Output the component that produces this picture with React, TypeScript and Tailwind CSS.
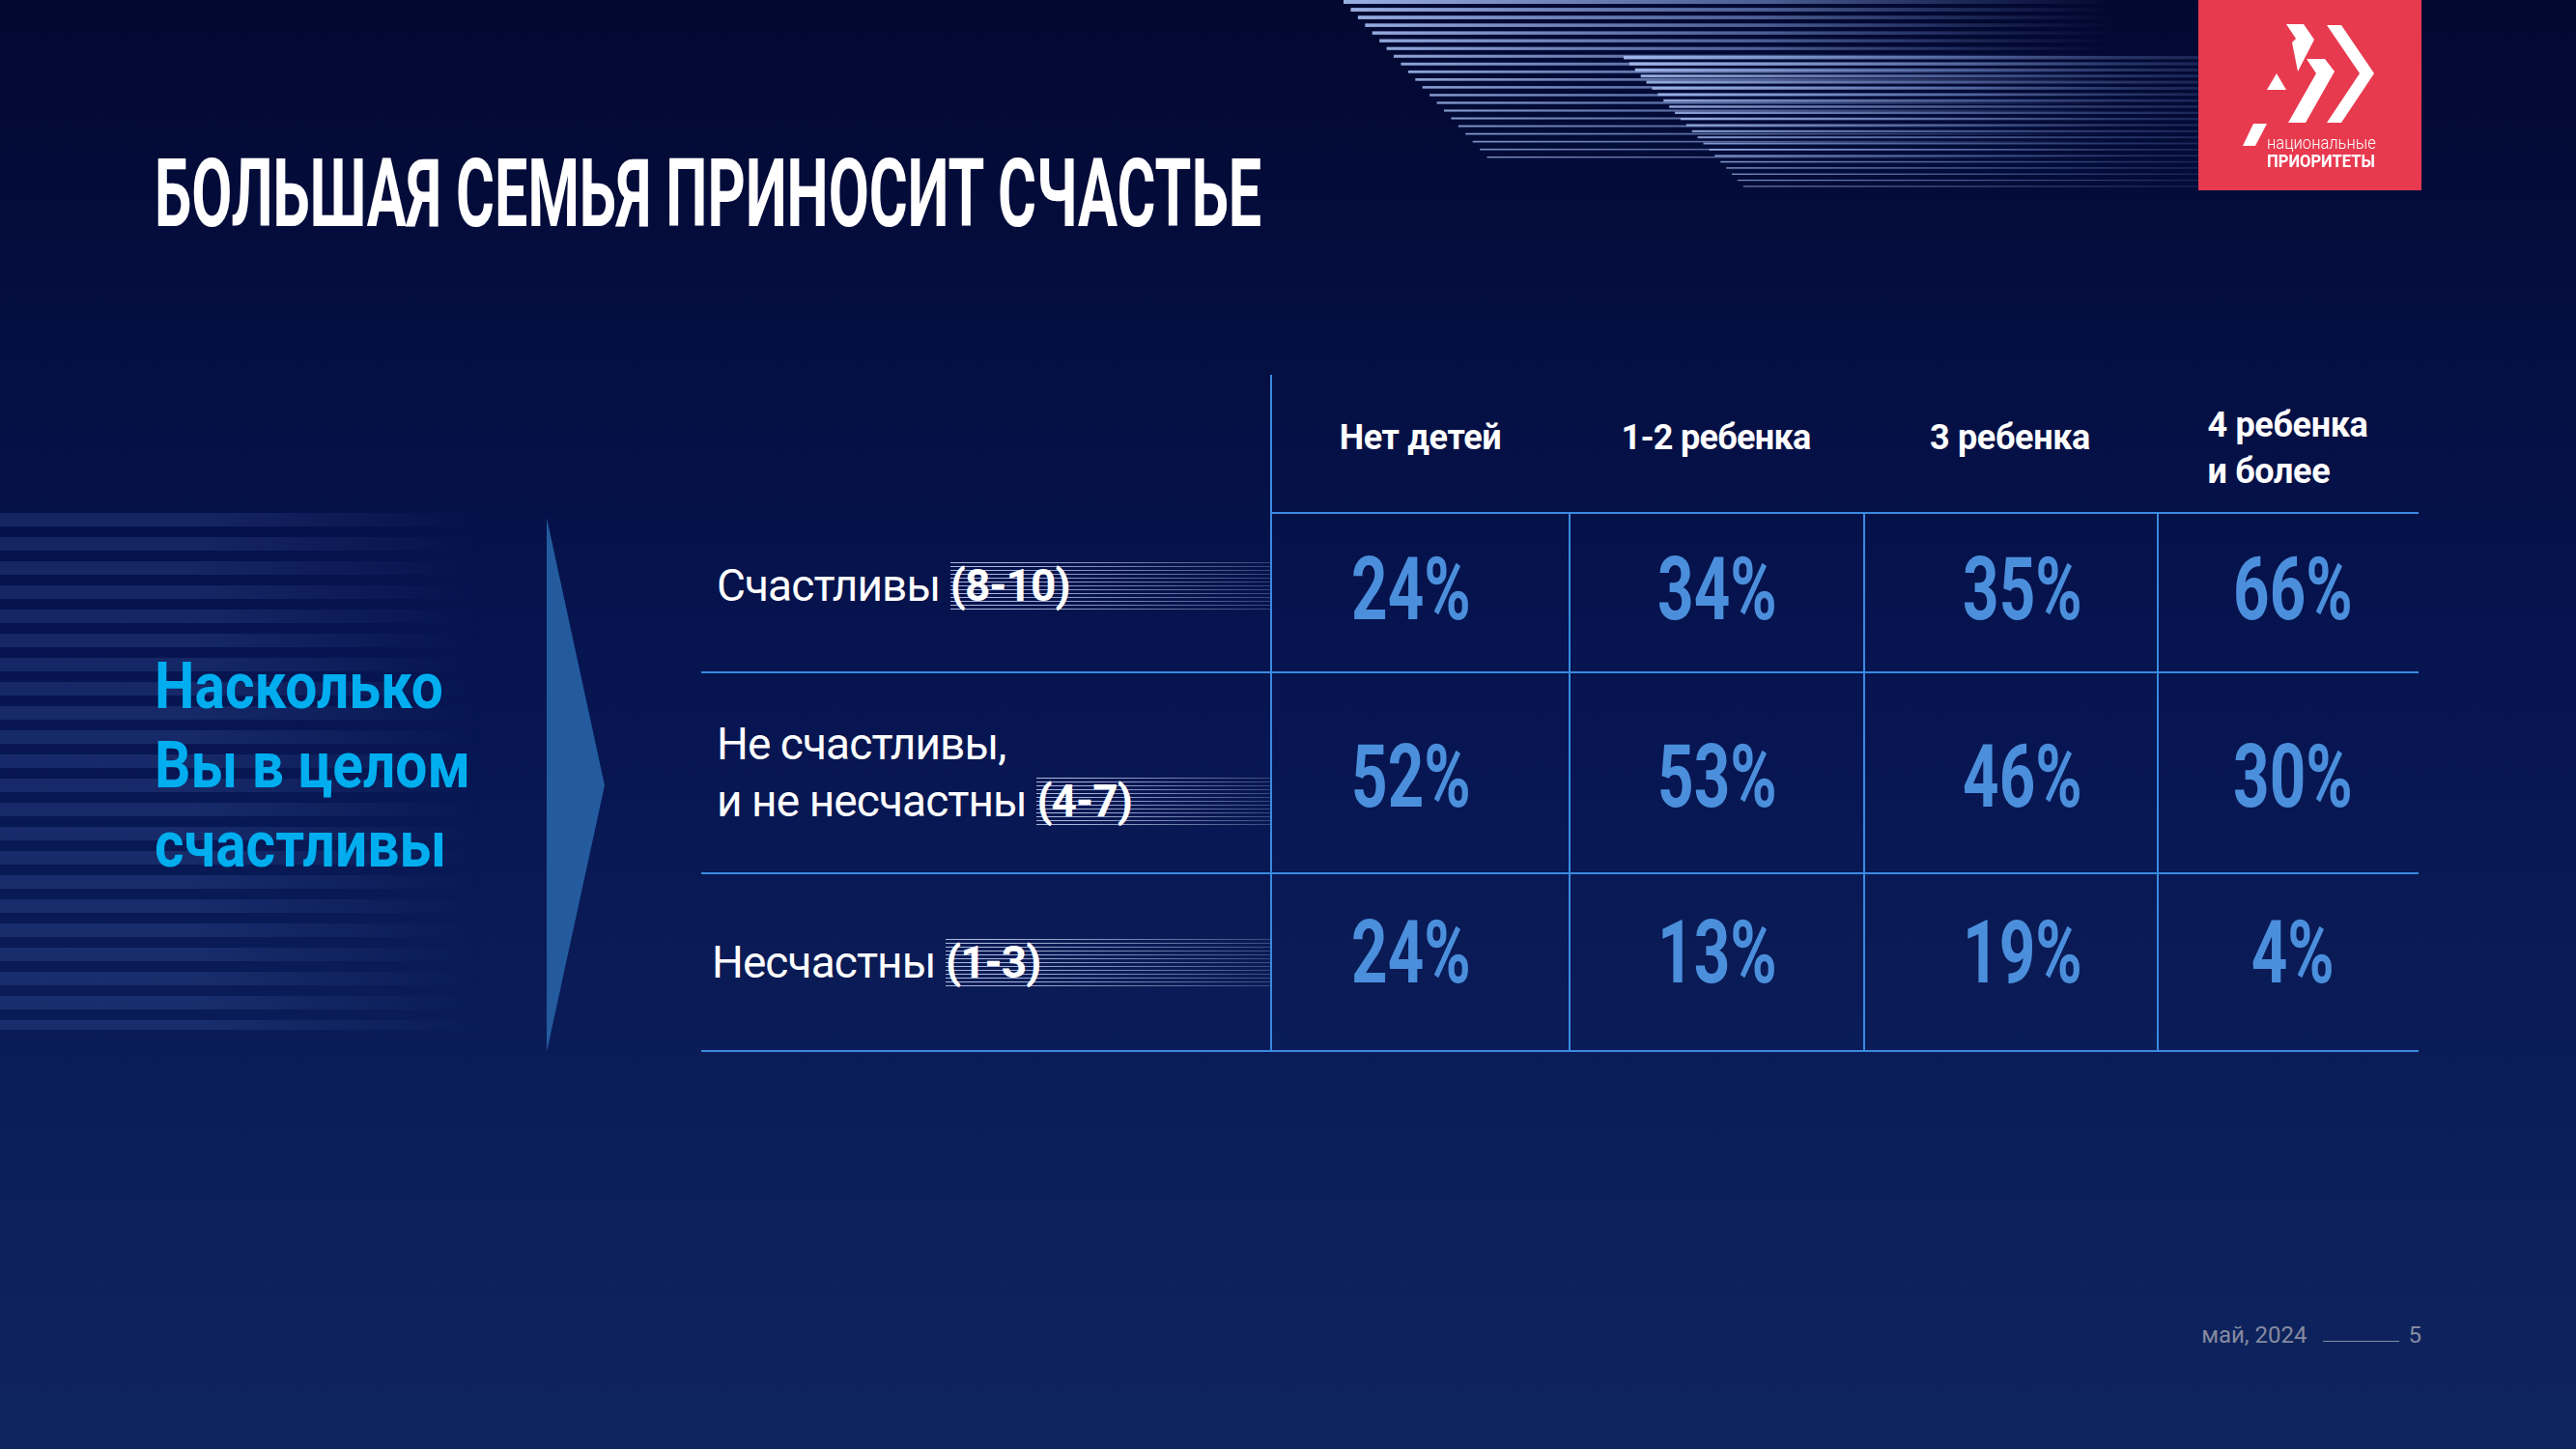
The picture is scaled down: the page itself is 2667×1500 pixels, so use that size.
import React from "react";

const line = "border-[#3a8ae0]";

// полосы сверху справа (декор)
const TopStripes = () => {
  const a = Array.from({ length: 21 }, (_, i) => {
    const y = i * 8.1;
    return { y, h: 4 - i * 0.13, x: 11 + y * 0.917 };
  });
  const b = Array.from({ length: 22 }, (_, i) => {
    const y = 58 + i * 6.4;
    return { y, h: 3.4 - i * 0.11, x: 301 + (y - 58) * 0.921 };
  });
  return (
    <svg className="absolute left-[1380px] top-0" width="900" height="210" viewBox="0 0 900 210">
      <defs>
        <linearGradient id="ga" x1="0" x2="810" y1="0" y2="0" gradientUnits="userSpaceOnUse">
          <stop offset="0" stopColor="#a3bbef" stopOpacity="0.95" />
          <stop offset="0.55" stopColor="#7e98d6" stopOpacity="0.6" />
          <stop offset="1" stopColor="#5d76b8" stopOpacity="0" />
        </linearGradient>
        <linearGradient id="gb" x1="300" x2="900" y1="0" y2="0" gradientUnits="userSpaceOnUse">
          <stop offset="0" stopColor="#a3bbef" stopOpacity="0.95" />
          <stop offset="0.6" stopColor="#7e98d6" stopOpacity="0.55" />
          <stop offset="1" stopColor="#5d76b8" stopOpacity="0.25" />
        </linearGradient>
      </defs>
      {a.map((s, i) => (
        <rect key={"a" + i} x={s.x} y={s.y} width={810 - s.x} height={s.h} fill="url(#ga)" />
      ))}
      {b.map((s, i) => (
        <rect key={"b" + i} x={s.x} y={s.y} width={900 - s.x} height={s.h} fill="url(#gb)" />
      ))}
    </svg>
  );
};

const Logo = () => (
  <div className="relative h-[197px] w-[231px] shrink-0 bg-[#e83a4f]">
    <svg className="absolute inset-0" width="231" height="197" viewBox="0 0 231 197" fill="#fff">
      <polygon points="133,26 148,26 182,76 148,127 133,127 167,76" />
      <polygon points="112,61 131,61 141,74 111,127 93,127 122,76" />
      <polygon points="91,25 109,25 120,41 103,74 97,44 101,40" />
      <polygon points="71,93 91,93 81,76" />
      <polygon points="46,151 59,151 71,128 57,128" />
    </svg>
    <div className="relative pl-[71px] pt-[138px] text-white">
      <div className="origin-left scale-x-[0.87] whitespace-nowrap text-[19px] font-light leading-[19px]">национальные</div>
      <div className="origin-left scale-x-[0.92] whitespace-nowrap text-[18px] font-bold leading-[19px]">ПРИОРИТЕТЫ</div>
    </div>
  </div>
);

const Striped = ({ children }: { children: React.ReactNode }) => (
  <span className="relative flex h-[49px] flex-1 items-center">
    <span className="absolute inset-0 bg-[repeating-linear-gradient(to_bottom,rgba(214,225,255,0.8)_0px,rgba(214,225,255,0.8)_1.5px,transparent_1.5px,transparent_4px)] [mask-image:linear-gradient(to_right,black_15%,rgba(0,0,0,0.3))]" />
    <span className="relative font-bold">{children}</span>
  </span>
);

// небольшие сдвиги цифр по колонкам, как на слайде
const colPad = ["pr-[20px]", "", "pl-[24px]", "pl-[8px]"];

const Value = ({ v, pad, col }: { v: string; pad: string; col: number }) => (
  <div className={`flex items-center justify-center border-b-2 border-l-2 ${line} ${pad} ${colPad[col]}`}>
    <span className="inline-block scale-x-[0.72] text-[91px] font-bold leading-none text-[#4b8fdc]">{v}</span>
  </div>
);

const rows = [
  { values: ["24%", "34%", "35%", "66%"], pad: "pb-[6px]" },
  { values: ["52%", "53%", "46%", "30%"], pad: "pt-[8px]" },
  { values: ["24%", "13%", "19%", "4%"], pad: "pb-[20px]" },
];

export default function App() {
  return (
    <div className="relative h-[1500px] w-[2667px] overflow-hidden bg-[linear-gradient(180deg,#020830_0%,#061450_45%,#0f255f_100%)] [font-family:Roboto,'Noto_Sans',sans-serif]">
      <TopStripes />
      <div className="absolute left-0 top-[531px] h-[535px] w-[500px] bg-[repeating-linear-gradient(to_bottom,rgba(80,110,185,0.22)_0px,rgba(80,110,185,0.22)_14px,transparent_14px,transparent_25px)] [mask-image:linear-gradient(to_right,black_40%,transparent)]" />

      <div className="relative flex h-full flex-col px-[160px]">
        <header className="flex items-start justify-between">
          <h1 className="mt-[152px] origin-left scale-x-[0.623] whitespace-nowrap text-[98px] font-bold leading-none text-white">
            БОЛЬШАЯ СЕМЬЯ ПРИНОСИТ СЧАСТЬЕ
          </h1>
          <Logo />
        </header>

        <main className="mt-[138px] flex items-start">
          <div className="w-[406px] shrink-0 pt-[282px] text-[66px] font-bold leading-[82px] text-[#00aeef]">
            <div className="origin-left scale-x-[0.89] whitespace-nowrap">Насколько</div>
            <div className="origin-left scale-x-[0.89] whitespace-nowrap">Вы в целом</div>
            <div className="origin-left scale-x-[0.89] whitespace-nowrap">счастливы</div>
          </div>

          <svg className="mt-[148px] shrink-0" width="60" height="553" viewBox="0 0 60 553">
            <polygon points="0,0 60,277 0,553" fill="#235b9e" />
          </svg>

          <div className="ml-[100px] grid grid-cols-[589px_309px_305px_304px_271px] grid-rows-[144px_165px_208px_184px] text-white">
            <div />
            <div className={`flex items-center justify-center border-b-2 border-l-2 pb-[12px] ${line}`}>
              <span className="text-[36px] font-bold tracking-[-0.01em]">Нет детей</span>
            </div>
            <div className={`flex items-center justify-center border-b-2 pb-[12px] ${line}`}>
              <span className="text-[36px] font-bold tracking-[-0.02em]">1-2 ребенка</span>
            </div>
            <div className={`flex items-center justify-center border-b-2 pb-[12px] ${line}`}>
              <span className="text-[36px] font-bold tracking-[-0.01em]">3 ребенка</span>
            </div>
            <div className={`flex items-center justify-center border-b-2 pt-[10px] ${line}`}>
              <span className="text-left text-[36px] font-bold leading-[48px] tracking-[-0.01em]">
                4 ребенка
                <br />
                и более
              </span>
            </div>

            <div className={`flex items-center border-b-2 pb-[14px] pl-4 text-[46px] tracking-[-0.02em] ${line}`}>
              <span className="whitespace-pre">Счастливы </span>
              <Striped>(8-10)</Striped>
            </div>
            {rows[0].values.map((v, i) => (
              <Value key={i} v={v} pad={rows[0].pad} col={i} />
            ))}

            <div className={`flex flex-col justify-center border-b-2 pl-4 text-[46px] leading-[59px] tracking-[-0.02em] ${line}`}>
              <div>Не счастливы,</div>
              <div className="flex items-center">
                <span className="whitespace-pre">и не несчастны </span>
                <Striped>(4-7)</Striped>
              </div>
            </div>
            {rows[1].values.map((v, i) => (
              <Value key={i} v={v} pad={rows[1].pad} col={i} />
            ))}

            <div className={`flex items-center border-b-2 pl-[11px] text-[46px] tracking-[-0.02em] ${line}`}>
              <span className="whitespace-pre">Несчастны </span>
              <Striped>(1-3)</Striped>
            </div>
            {rows[2].values.map((v, i) => (
              <Value key={i} v={v} pad={rows[2].pad} col={i} />
            ))}
          </div>
        </main>

        <footer className="mb-[106px] mt-auto flex items-center justify-end text-[24px] leading-[24px] text-[#858aa0]">
          <span>май, 2024</span>
          <span className="ml-4 mr-[10px] mt-[12px] h-px w-[79px] bg-[#858aa0]" />
          <span>5</span>
        </footer>
      </div>
    </div>
  );
}
